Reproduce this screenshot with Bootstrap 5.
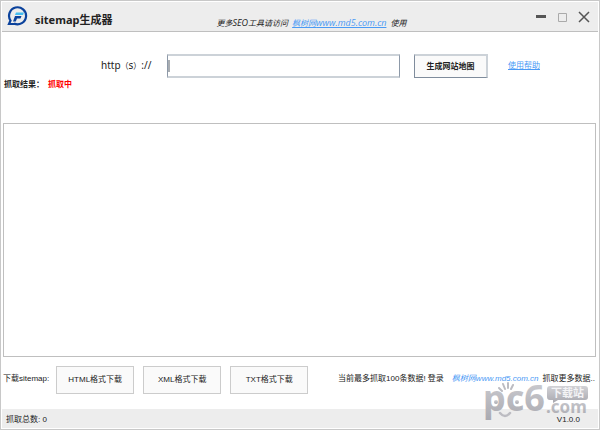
<!DOCTYPE html>
<html lang="zh-CN">
<head>
<meta charset="utf-8">
<meta name="viewport" content="width=device-width, initial-scale=1">
<title>sitemap生成器</title>
<link href="https://cdn.jsdelivr.net/npm/bootstrap@5.3.0/dist/css/bootstrap.min.css" rel="stylesheet">
<style>
body{font:8px/12px "Liberation Sans","Noto Sans CJK SC",sans-serif;color:#222;background:#fff}
.app-window{border:1px solid #c8c8c8;padding:1px}
.title-bar{background:#ededed;border-bottom:1px solid #bfbfbf;height:30px;padding-left:5px}
.app-name{font:bold 11px/16px "Noto Sans","Noto Sans CJK SC",sans-serif;margin:10px 0 0 6px}
.promo{font:italic 8px/12px "Open Sans","Noto Sans CJK SC",sans-serif;padding-top:15px;margin-left:104px;gap:4px}
.promo .latin{font-size:9px}
a{color:#4a9af5}
.win-controls{gap:10px;padding:6px 8px 0 0}
.win-controls .btn{line-height:1}
.win-controls svg{display:block}
.query-row{padding:21px 58px 0 99px}
.query-row label{font:10px/24px "Noto Sans","Noto Sans CJK SC",sans-serif;width:66px}
.query-row label span{font-size:8px}
.query-row input{border:1px solid #8d99a8;border-top:2px solid #ccd2d8;border-bottom:2px solid #ccd2d8;height:24px;font-size:12px;min-width:0;background:linear-gradient(#a8adb2,#a8adb2) 0 4px/2px 12px no-repeat #fff}
.btn-make{font:bold 8px/12px "Noto Sans CJK SC",sans-serif;width:74px;height:24px;border:1px solid #7f8c9c;border-top:2px solid #ccd2d8;border-right:2px solid #ccd2d8;border-radius:0;background:#fafafa;color:#222;margin:0 20px 0 14px}
.result-row{font:bold 8px/12px "Noto Sans CJK SC",sans-serif;padding:0 2px;gap:4px}
.state-red{color:#f00}
.result-box{border:1px solid #bfbfbf;margin:33px 2px 0 1px}
.dl-row{padding:9px 3px 15px 1px}
.raised{padding-bottom:3px}
.btn-dl{font-size:8px;line-height:12px;width:78px;height:28px;border:1px solid #ccc;border-radius:0;background:#fafafa;color:#222}
.dl-set{gap:9px;margin-left:7px}
.status-bar{background:#ededed;padding:5px 18px 2px 4px}
.watermark{right:9px;bottom:3px;width:110px;height:46px;pointer-events:none;overflow:visible}
.watermark text{font-family:"Noto Sans","Noto Sans CJK SC",sans-serif;font-weight:bold}
</style>
</head>
<body>
<div class="app-window vh-100 d-flex flex-column position-relative">
<header class="title-bar d-flex">
<svg class="mt-1" width="22" height="22" viewBox="0 0 22 22" aria-hidden="true"><path d="M7 17.500A8.500 8.500 0 1 0 3.500 14.500L2 18L8 18" fill="none" stroke="#0b429c" stroke-width="2.200"/><path d="M9 6.500H17L16 9H8Z" fill="#45bdf0"/><path d="M6 15.500L8 10H14.500L13.500 12.500H10L8.800 15.500Z" fill="#0b429c"/></svg>
<h1 class="app-name text-nowrap">sitemap生成器</h1>
<div class="promo d-flex text-nowrap"><span>更多<span class="latin">SEO</span>工具请访问</span><a href="#">枫树网<span class="latin">www.md5.com.cn</span></a><span>使用</span></div>
<div class="win-controls d-flex align-items-start ms-auto">
<button class="btn border-0 p-0" aria-label="最小化"><svg width="12" height="18"><path d="M1 8.500H11" stroke="#555" stroke-width="3"/></svg></button>
<button class="btn border-0 p-0" aria-label="最大化"><svg width="11" height="18"><path d="M1.500 5.500H9.500V13.500H1.500Z" fill="none" stroke="#aaa"/></svg></button>
<button class="btn border-0 p-0" aria-label="关闭"><svg width="12" height="18"><path d="M1 4L11 14M11 4L1 14" stroke="#555" stroke-width="1.500"/></svg></button>
</div>
</header>
<div class="query-row d-flex align-items-center">
<label for="site-url" class="text-nowrap">http<span>（</span>s<span>）</span>://</label>
<input id="site-url" type="text" class="flex-grow-1">
<button class="btn btn-make p-0">生成网站地图</button>
<a href="#">使用帮助</a>
</div>
<div class="result-row d-flex"><span>抓取结果：</span><span class="state-red">抓取中</span></div>
<main class="result-box flex-grow-1"></main>
<div class="dl-row d-flex align-items-center text-nowrap">
<span class="raised">下载sitemap:</span>
<div class="dl-set d-flex">
<button class="btn btn-dl p-0">HTML格式下载</button>
<button class="btn btn-dl p-0">XML格式下载</button>
<button class="btn btn-dl p-0">TXT格式下载</button>
</div>
<span class="raised ms-auto">当前最多抓取100条数据! 登录</span>
<a href="#" class="raised fst-italic text-decoration-none ms-2">枫树网www.md5.com.cn</a>
<span class="raised ms-1">抓取更多数据..</span>
</div>
<footer class="status-bar d-flex justify-content-between"><span>抓取总数: 0</span><span>V1.0.0</span></footer>
<svg class="watermark position-absolute" viewBox="480 380 110 46" aria-hidden="true">
<defs><linearGradient id="steel" x1="0" y1="0" x2="0" y2="1"><stop offset="0" stop-color="#d2d2d6"/><stop offset="1" stop-color="#a8a8af"/></linearGradient></defs>
<g fill="none" stroke="#bcbcc2" stroke-linecap="round">
<path d="M499 388L502 391M503 384L505 389M508 383V388M513 385L511 389" stroke-width="2"/>
<path d="M500 413Q505 419 510 413" stroke-width="2.500"/>
</g>
<g fill="url(#steel)">
<text x="483" y="411" font-size="36">pc6</text>
<text x="546" y="413" font-size="17">.com</text>
<path d="M550 386H585Q588 386 588 389V397Q588 400 585 400H558L553 403V400H550Q547 400 547 397V389Q547 386 550 386Z"/>
<circle cx="496" cy="402" r="2"/><circle cx="517" cy="402" r="2"/>
</g>
<text x="551" y="397" font-size="11" fill="#f4f4f6">下载站</text>
</svg>
</div>
<script src="https://cdn.jsdelivr.net/npm/bootstrap@5.3.0/dist/js/bootstrap.bundle.min.js"></script>
</body>
</html>
